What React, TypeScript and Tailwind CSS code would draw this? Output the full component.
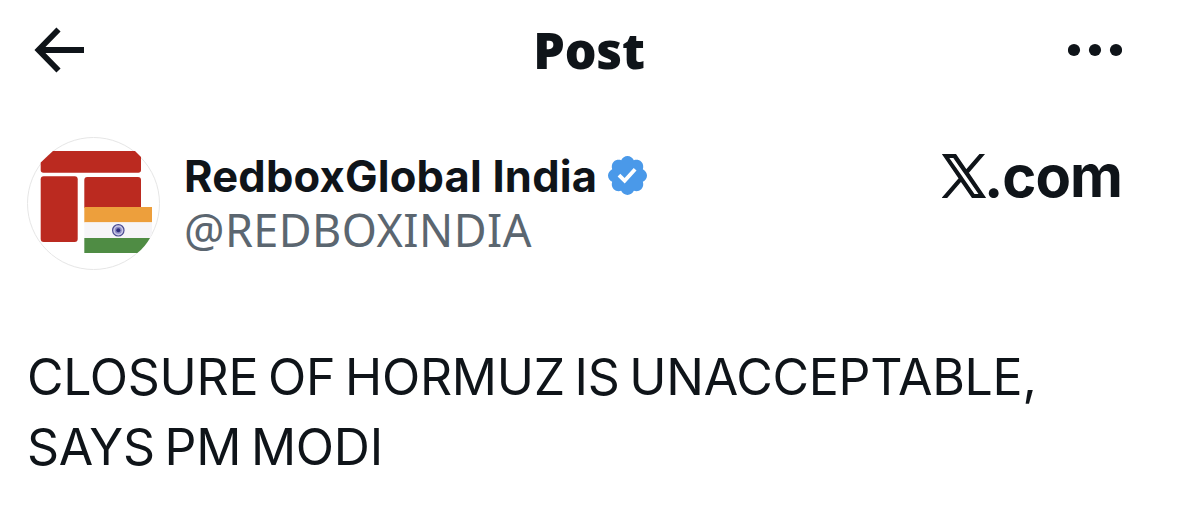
function BackArrow() {
  return (
    <svg width="50" height="46" viewBox="0 0 50 46" fill="none" stroke="#0f1419" strokeWidth="5.8">
      <path d="M24.5 2.5 L4.5 23 L24.5 43.5" />
      <path d="M5 23 H50" />
    </svg>
  );
}

function MoreDots() {
  return (
    <svg width="54" height="14" viewBox="0 0 54 14" fill="#0f1419">
      <circle cx="6" cy="7" r="6.1" />
      <circle cx="27" cy="7" r="6.1" />
      <circle cx="48" cy="7" r="6.1" />
    </svg>
  );
}

function Avatar() {
  return (
    <svg className="shrink-0" width="133" height="133" viewBox="0 0 133 133">
      <circle cx="66.5" cy="66.5" r="66" fill="#fff" stroke="#e6e6e6" />
      <path
        d="M13.7 25.5 L26 14 H108 L114 20 V33 Q114 35.7 111.3 35.7 H16.5 Q13.7 35.7 13.7 33 Z"
        fill="#bb2a20"
      />
      <rect x="13.7" y="39.3" width="37" height="65.7" rx="3" fill="#bb2a20" />
      <path d="M57.3 71 V43 Q57.3 40 60.3 40 H111 Q114 40 114 43 V71 Z" fill="#bb2a20" />
      <path d="M57.3 70 H125 V85.5 H57.3 Z" fill="#ed9f3c" />
      <path d="M57.3 85.3 H125 V96 L123 101.2 H57.3 Z" fill="#f6f5f8" />
      <path d="M57.3 101 H123 Q118 110 110.3 116 H57.3 Z" fill="#4f8c44" />
      <circle cx="91.3" cy="93.3" r="5.7" fill="#c9c8e6" stroke="#4a4a91" strokeWidth="1.2" />
      <circle cx="91.3" cy="93.3" r="3.5" fill="#8c8bc4" />
      <circle cx="91.3" cy="93.3" r="2" fill="#2f2e7d" />
    </svg>
  );
}

function VerifiedBadge() {
  return (
    <svg className="-mt-[2px]" width="39" height="39" viewBox="1.75 1.75 20.5 20.5" fill="#4a99e9">
      <path d="M22.25 12c0-1.43-.88-2.67-2.19-3.34.46-1.39.2-2.9-.81-3.91s-2.52-1.27-3.91-.81c-.66-1.31-1.91-2.19-3.34-2.19s-2.67.88-3.33 2.19c-1.4-.46-2.91-.2-3.92.81s-1.26 2.52-.8 3.91c-1.31.67-2.2 1.91-2.2 3.34s.89 2.67 2.2 3.34c-.46 1.39-.21 2.9.8 3.91s2.52 1.26 3.91.81c.67 1.31 1.91 2.19 3.34 2.19s2.68-.88 3.34-2.19c1.39.45 2.9.2 3.91-.81s1.27-2.52.81-3.91c1.31-.67 2.19-1.91 2.19-3.34zm-11.71 4.2L6.8 12.46l1.41-1.42 2.26 2.26 4.8-5.23 1.47 1.36-6.2 6.77z" />
    </svg>
  );
}

function XLogo() {
  return (
    <svg
      className="mr-[-2px]"
      width="44"
      height="44"
      viewBox="0 -0.3 24 24.6"
      fill="#0f1419"
      stroke="#0f1419"
      strokeWidth="0.8"
    >
      <path d="M14.234 10.162 22.977 0h-2.072l-7.591 8.824L7.251 0H.258l9.168 13.343L.258 24H2.33l8.016-9.318L16.749 24h6.993zm-2.837 3.299-.929-1.329L3.076 1.56h3.182l5.965 8.532.929 1.329 7.754 11.09h-3.182z" />
    </svg>
  );
}

export default function App() {
  return (
    <div className="h-[527px] w-[1179px] overflow-hidden bg-white text-[#0f1419]">
      <header className="flex h-[100px] items-center pr-[57px] pl-[34px]">
        <div className="flex-1">
          <BackArrow />
        </div>
        <h1 className="mr-[-22px] font-['Noto_Sans',sans-serif] text-[50px] leading-none font-black tracking-[-0.2px]">
          Post
        </h1>
        <div className="flex flex-1 justify-end">
          <MoreDots />
        </div>
      </header>

      <section className="flex items-start pt-[37px] pr-[57px] pl-[27px]">
        <Avatar />
        <div className="ml-[24px] pt-[12px]">
          <div className="flex items-center gap-[11px]">
            <span className="font-['Inter',sans-serif] text-[43.5px] leading-[54px] font-bold tracking-[0.18px] whitespace-nowrap">
              RedboxGlobal India
            </span>
            <VerifiedBadge />
          </div>
          <div className="font-['Noto_Sans',sans-serif] text-[45px] leading-[54px] tracking-[0.45px] text-[#5b6670]">
            @REDBOXINDIA
          </div>
        </div>
        <div className="ml-auto flex items-center pt-[12px]">
          <XLogo />
          <span className="font-['Inter',sans-serif] text-[58px] leading-[54px] font-bold tracking-[-1px]">
            .com
          </span>
        </div>
      </section>

      <p className="pt-[72px] pl-[27px] font-['Inter',sans-serif] text-[50px] leading-[70px] tracking-[-0.27px] [word-spacing:-4px]">
        CLOSURE OF HORMUZ IS UNACCEPTABLE,
        <br />
        SAYS PM MODI
      </p>
    </div>
  );
}
